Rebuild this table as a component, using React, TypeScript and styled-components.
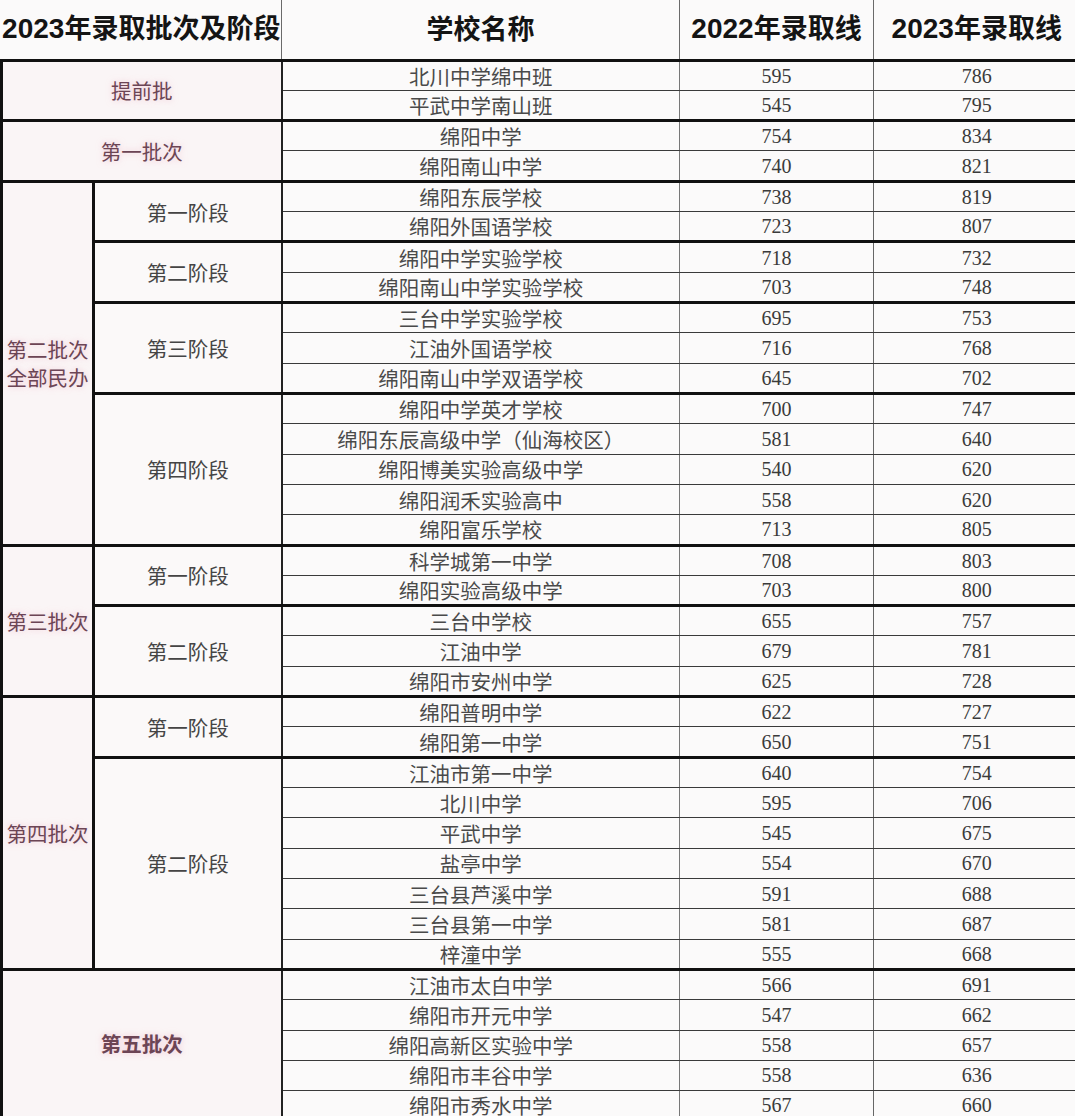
import * as React from 'react'
import styled, { createGlobalStyle } from 'styled-components'

const GlobalStyle = createGlobalStyle`
html, body {
    margin: 0;
    padding: 0;
    background: #fbfafa;
}
body {
    font-family: "Noto Sans CJK SC", "Noto Sans", sans-serif;
    overflow: hidden;
}
`

const Sheet = styled.table`
border-collapse: collapse;
table-layout: fixed;
width: 1078px;
background: #fbfafa;
`

const HeadRow = styled.tr`
height: 60px;
`

const BodyRow = styled.tr`
height: 30.32px;
`

const HeadCell = styled.th<{ $last?: boolean }>`
padding: 0 0 2px;
font-size: 27px;
line-height: 32px;
font-weight: 700;
color: #141414;
text-align: center;
white-space: nowrap;
border-bottom: 3px solid #111;
border-right: ${p => p.$last ? 'none' : '1.5px solid #6a6a6a'};
`

const Digits = styled.span`
font-family: "Liberation Sans Narrow", "Liberation Sans", sans-serif;
font-weight: 700;
font-size: 28px;
`

const BatchCell = styled.td<{ $wide?: boolean, $serif?: boolean }>`
padding: 0;
text-align: center;
vertical-align: middle;
font-family: ${p => p.$serif ? '"Liberation Serif", "Noto Sans CJK SC", serif' : '"Noto Sans CJK SC", sans-serif'};
font-weight: ${p => p.$serif ? 700 : 400};
font-size: 20.5px;
line-height: 28px;
color: #6c4555;
text-shadow: 0 0 6px rgba(236, 160, 182, 0.55);
background: #faf5f6;
border-left: 3px solid #111;
border-right: ${p => p.$wide ? '2px solid #222' : '3px solid #111'};
border-bottom: 3px solid #111;
`

const StageCell = styled.td`
padding: 0;
text-align: center;
vertical-align: middle;
font-size: 20.5px;
line-height: 24px;
color: #454545;
background: #fbf9f9;
border-right: 2px solid #222;
border-bottom: 3px solid #111;
`

const NameCell = styled.td<{ $end?: boolean }>`
padding: 0;
text-align: center;
font-size: 20.5px;
line-height: 24px;
color: #4a4a4a;
white-space: nowrap;
border-right: 1.5px solid #777;
border-bottom: ${p => p.$end ? '3px solid #111' : '1px solid #3a3a3a'};
`

const ScoreCell = styled.td<{ $end?: boolean, $last?: boolean }>`
padding: 0;
text-align: center;
font-family: "Liberation Serif", serif;
font-size: 20px;
line-height: 24px;
color: #3a3a3a;
border-right: ${p => p.$last ? 'none' : '1.5px solid #666'};
border-bottom: ${p => p.$end ? '3px solid #111' : '1px solid #3a3a3a'};
`

type School = [string, number, number]
type Stage = { name: string, schools: School[] }
type Batch = { name: string[], serif?: boolean, stages: Stage[] }

const batches: Batch[] = [
    { name: ['提前批'], stages: [{ name: '', schools: [['北川中学绵中班', 595, 786], ['平武中学南山班', 545, 795]] }] },
    { name: ['第一批次'], stages: [{ name: '', schools: [['绵阳中学', 754, 834], ['绵阳南山中学', 740, 821]] }] },
    {
        name: ['第二批次', '全部民办'], stages: [
            { name: '第一阶段', schools: [['绵阳东辰学校', 738, 819], ['绵阳外国语学校', 723, 807]] },
            { name: '第二阶段', schools: [['绵阳中学实验学校', 718, 732], ['绵阳南山中学实验学校', 703, 748]] },
            { name: '第三阶段', schools: [['三台中学实验学校', 695, 753], ['江油外国语学校', 716, 768], ['绵阳南山中学双语学校', 645, 702]] },
            {
                name: '第四阶段', schools: [
                    ['绵阳中学英才学校', 700, 747],
                    ['绵阳东辰高级中学（仙海校区）', 581, 640],
                    ['绵阳博美实验高级中学', 540, 620],
                    ['绵阳润禾实验高中', 558, 620],
                    ['绵阳富乐学校', 713, 805],
                ]
            },
        ]
    },
    {
        name: ['第三批次'], stages: [
            { name: '第一阶段', schools: [['科学城第一中学', 708, 803], ['绵阳实验高级中学', 703, 800]] },
            { name: '第二阶段', schools: [['三台中学校', 655, 757], ['江油中学', 679, 781], ['绵阳市安州中学', 625, 728]] },
        ]
    },
    {
        name: ['第四批次'], stages: [
            { name: '第一阶段', schools: [['绵阳普明中学', 622, 727], ['绵阳第一中学', 650, 751]] },
            {
                name: '第二阶段', schools: [
                    ['江油市第一中学', 640, 754],
                    ['北川中学', 595, 706],
                    ['平武中学', 545, 675],
                    ['盐亭中学', 554, 670],
                    ['三台县芦溪中学', 591, 688],
                    ['三台县第一中学', 581, 687],
                    ['梓潼中学', 555, 668],
                ]
            },
        ]
    },
    {
        name: ['第五批次'], serif: true, stages: [{
            name: '', schools: [
                ['江油市太白中学', 566, 691],
                ['绵阳市开元中学', 547, 662],
                ['绵阳高新区实验中学', 558, 657],
                ['绵阳市丰谷中学', 558, 636],
                ['绵阳市秀水中学', 567, 660],
            ]
        }]
    },
]

function renderRows() {
    const rows: React.ReactNode[] = []
    batches.forEach((batch, bi) => {
        const total = batch.stages.reduce((n, s) => n + s.schools.length, 0)
        const wide = batch.stages.length === 1 && !batch.stages[0].name
        let first = true
        batch.stages.forEach((stage, si) => {
            stage.schools.forEach((school, ri) => {
                const end = ri === stage.schools.length - 1
                rows.push(
                    <BodyRow key={`${bi}-${si}-${ri}`}>
                        {first && (
                            <BatchCell rowSpan={total} colSpan={wide ? 2 : 1} $wide={wide} $serif={batch.serif}>
                                {batch.name.map(line => <div key={line}>{line}</div>)}
                            </BatchCell>
                        )}
                        {!wide && ri === 0 && <StageCell rowSpan={stage.schools.length}>{stage.name}</StageCell>}
                        <NameCell $end={end}>{school[0]}</NameCell>
                        <ScoreCell $end={end}>{school[1]}</ScoreCell>
                        <ScoreCell $end={end} $last>{school[2]}</ScoreCell>
                    </BodyRow>
                )
                first = false
            })
        })
    })
    return rows
}

export default function App() {
    return (
        <>
            <GlobalStyle />
            <Sheet>
                <colgroup>
                    <col style={{ width: 92 }} />
                    <col style={{ width: 188 }} />
                    <col style={{ width: 398 }} />
                    <col style={{ width: 194 }} />
                    <col style={{ width: 206 }} />
                </colgroup>
                <thead>
                    <HeadRow>
                        <HeadCell colSpan={2}><Digits>2023</Digits>年录取批次及阶段</HeadCell>
                        <HeadCell>学校名称</HeadCell>
                        <HeadCell><Digits>2022</Digits>年录取线</HeadCell>
                        <HeadCell $last><Digits>2023</Digits>年录取线</HeadCell>
                    </HeadRow>
                </thead>
                <tbody>{renderRows()}</tbody>
            </Sheet>
        </>
    )
}
